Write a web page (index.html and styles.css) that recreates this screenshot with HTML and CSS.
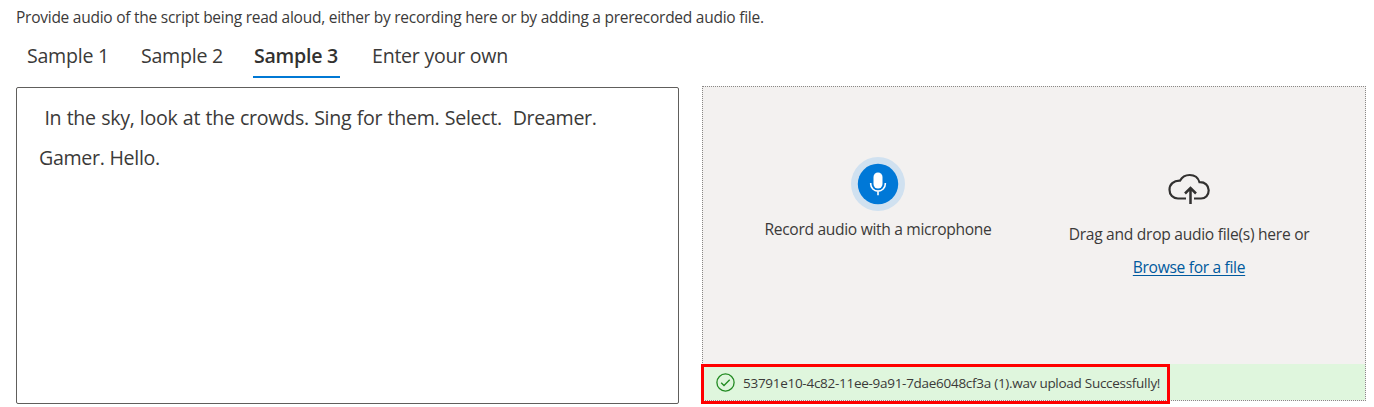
FILE: index.html
```html
<!DOCTYPE html>
<html lang="en">
<head>
<meta charset="utf-8">
<title>Audio sample</title>
<link rel="stylesheet" href="styles.css">
</head>
<body>
<p class="intro"><span>Provide audio of the script being read aloud, either by recording here or by adding a prerecorded audio file.</span></p>
<nav class="tabs">
  <a class="tab">Sample 1</a>
  <a class="tab">Sample 2</a>
  <a class="tab active">Sample 3</a>
  <a class="tab own">Enter your own</a>
</nav>
<main class="panels">
  <div class="script-box"><span class="line first">&nbsp;In the sky, look at the crowds. Sing for them. Select.&nbsp; Dreamer.</span><span class="line second">Gamer. Hello.</span></div>
  <section class="upload">
    <div class="options">
      <div class="record">
        <svg class="mic" width="54" height="54" viewBox="0 0 54 54">
          <circle cx="27" cy="27" r="27" fill="#d0e1f0"/>
          <circle cx="27" cy="27" r="20.2" fill="#0078d7"/>
          <rect x="22.5" y="15.5" width="9" height="16" rx="4.5" fill="#fff"/>
          <path d="M19.7 26v1a7.2 7 0 0 0 14.600 0v-1M27 34v4.300" fill="none" stroke="#fff" stroke-width="1.600"/>
        </svg>
        <span class="label">Record audio with a microphone</span>
      </div>
      <div class="drop">
        <svg class="cloud" width="42" height="32" viewBox="0 0 42 32" fill="none" stroke="#323130" stroke-width="2.200">
          <path d="M18 25.500H10C5 25.500 1.500 21.800 1.500 16.700C1.500 11.500 5.500 7.500 12 7.700C14 4 17.500 2 21.700 2C26.500 2 30.200 4.800 31.500 9.200C37 9 40.700 12.400 40.700 17.200C40.700 22 37.500 25.500 33 25.500H26"/>
          <path d="M22.500 31V15M17 20.500L22.500 15L28 20.500" stroke-width="2.500"/>
        </svg>
        <span class="label drag">Drag and drop audio file(s) here or</span>
        <a class="browse">Browse for a file</a>
      </div>
    </div>
    <div class="status">
      <svg class="check" width="19" height="19" viewBox="0 0 19 19" fill="none" stroke="#218a21" stroke-width="1.300">
        <circle cx="9.500" cy="9.500" r="8.600"/>
        <path d="M5.200 9.700L8 12.500L13.700 6.800"/>
      </svg>
      <span class="message">53791e10-4c82-11ee-9a91-7dae6048cf3a (1).wav upload Successfully!</span>
    </div>
    <div class="highlight"></div>
  </section>
</main>
</body>
</html>
```
FILE: styles.css
```css
* { box-sizing: border-box; }
body {
  margin: 0;
  height: 407px;
  overflow: hidden;
  background: #fff;
  color: #3b3a39;
  font-family: "Open Sans", "Noto Sans", sans-serif;
}
.intro { margin: 0; height: 36px; padding: 7px 0 0 16px; font-size: 15.5px; line-height: 20px; letter-spacing: -.25px; white-space: nowrap; }
.tabs { display: flex; height: 42px; padding-left: 27px; font-size: 19.6px; line-height: 39px; letter-spacing: -.26px; }
.tab { height: 42px; width: 84px; margin-right: 30px; white-space: nowrap; }
.active { width: 87px; margin: 0 32px 0 -2px; padding-left: 1px; font-weight: 600; color: #323130; border-bottom: 2px solid #0078d4; }
.own { width: auto; }
.panels { display: flex; gap: 23px; padding: 8px 0 0 16px; align-items: flex-start; }
.script-box {
  display: flex;
  flex-direction: column;
  width: 663px;
  height: 317px;
  margin-top: 1px;
  padding: 10px 22px;
  border: 1px solid #605e5c;
  border-radius: 2px;
  font-size: 19.6px;
  line-height: 40px;
  letter-spacing: -.3px;
}
.line { align-self: flex-start; white-space: nowrap; }
.first { word-spacing: .6px; }
.upload {
  position: relative;
  display: flex;
  flex-direction: column;
  justify-content: space-between;
  width: 664px;
  height: 315px;
  background: #f3f1f0;
  border: 1px dotted #8a8886;
}
.options { display: flex; font-size: 15.6px; line-height: 20px; letter-spacing: -.32px; white-space: nowrap; }
.record, .drop { display: flex; flex-direction: column; align-items: center; }
.record { width: 350px; padding-top: 70px; }
.record .label { margin-top: 8px; }
.drop { width: 272px; padding-top: 86px; }
.drag { margin-top: 19px; letter-spacing: -.28px; }
.browse { margin-top: 13px; color: #005a9e; text-decoration: underline; text-underline-offset: 2px; }
.status { display: flex; align-items: center; height: 36px; padding-left: 13px; gap: 8px; background: #dff6dd; font-size: 13.5px; letter-spacing: -.28px; white-space: nowrap; }
.message { padding-top: 2px; }
.highlight { position: absolute; left: -2px; top: 277px; width: 469px; height: 40px; border: 3px solid #f00; }
```
